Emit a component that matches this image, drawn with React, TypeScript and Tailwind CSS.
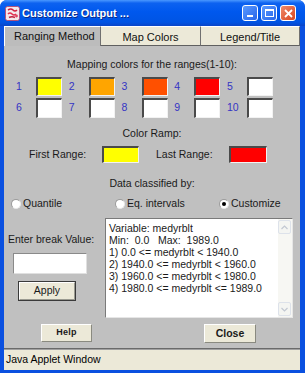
import React from "react";

function Swatch({ color, w = 26, h = 19 }: { color: string; w?: number; h?: number }) {
  return (
    <div
      className="border-t-2 border-l-2 border-b border-r border-t-[#4a4a4a] border-l-[#4a4a4a] border-b-[#f2f2f2] border-r-[#f2f2f2]"
      style={{ width: w, height: h, background: color }}
    />
  );
}

function Radio({ checked }: { checked?: boolean }) {
  return (
    <div className="w-[10px] h-[10px] rounded-full bg-white border border-t-[#9a9a9a] border-l-[#9a9a9a] border-b-[#e8e8e8] border-r-[#e8e8e8] flex items-center justify-center">
      {checked && <div className="w-[4px] h-[4px] rounded-full bg-black" />}
    </div>
  );
}

export default function App() {
  const row1 = [
    { n: "1", c: "#ffff00" },
    { n: "2", c: "#ffa500" },
    { n: "3", c: "#ff5000" },
    { n: "4", c: "#ff0000" },
    { n: "5", c: "#ffffff" },
  ];
  const row2 = ["6", "7", "8", "9", "10"];
  return (
    <div className="w-[305px] h-[373px] bg-[#0a50e0] rounded-t-[7px] flex flex-col overflow-hidden font-['Liberation_Sans',Arial,sans-serif] text-[#1a1a1a]">
      {/* Title bar */}
      <div className="h-[26px] shrink-0 flex items-center bg-[linear-gradient(to_bottom,#4a98ff_0%,#0d62f0_12%,#0058ee_45%,#0054e4_85%,#0a45c8_100%)] pl-[5px] pr-[9px]">
        <svg width="15" height="15" viewBox="0 0 15 15" className="shrink-0">
          <rect x="0.5" y="0.5" width="14" height="14" rx="2" fill="#f4e8ec" stroke="#c04060" strokeWidth="0.8" />
          <path d="M3 4 Q6 2 8 4 T12 4" stroke="#d02040" strokeWidth="1.6" fill="none" />
          <path d="M3 8 Q5 6 7 8 T11 8" stroke="#e03050" strokeWidth="1.6" fill="none" />
          <path d="M4 11.5 Q7 10 10 11.5" stroke="#c02040" strokeWidth="1.6" fill="none" />
          <circle cx="11.5" cy="10" r="1.4" fill="#e04060" />
        </svg>
        <div className="ml-[2px] text-white font-bold text-[11px] [text-shadow:1px_1px_0_#0a2a8a]">
          Customize Output ...
        </div>
        <div className="ml-auto flex gap-[3px] items-center">
          <div className="w-[16px] h-[16px] rounded-[3px] border border-white bg-[linear-gradient(135deg,#5a9aff,#2866ea)] flex items-end justify-center pb-[3px]">
            <div className="w-[6px] h-[2px] bg-white" />
          </div>
          <div className="w-[16px] h-[16px] rounded-[3px] border border-white bg-[linear-gradient(135deg,#5a9aff,#2866ea)] flex items-center justify-center">
            <div className="w-[9px] h-[8px] border border-white border-t-2" />
          </div>
          <div className="w-[16px] h-[16px] rounded-[3px] border border-white bg-[linear-gradient(135deg,#f08a6a,#d8451e)] flex items-center justify-center">
            <svg width="9" height="9" viewBox="0 0 9 9">
              <path d="M1 1 L8 8 M8 1 L1 8" stroke="white" strokeWidth="1.8" />
            </svg>
          </div>
        </div>
      </div>

      {/* Body */}
      <div className="flex-1 ml-[4px] mr-[5px] mb-[3px] flex flex-col bg-[#c0c0c0]">
        {/* Tabs */}
        <div className="h-[20px] shrink-0 flex text-[11px] text-[#111] bg-[#c0c0c0]">
          <div className="w-[97px] bg-[#bcbcbc] border-t border-l border-white border-r border-r-[#707070] pl-[9px] pt-[1px]">
            Ranging Method
          </div>
          <div className="w-[100px] bg-[#ece9d8] border-t border-white border-r border-r-[#707070] border-b border-b-[#606060] flex items-center justify-center pt-[2px]">
            Map Colors
          </div>
          <div className="flex-1 bg-[#ece9d8] border-t border-white border-r border-r-[#707070] border-b border-b-[#606060] flex items-center justify-center pt-[2px]">
            Legend/Title
          </div>
        </div>

        {/* Heading */}
        <div className="mt-[11px] h-[14px] leading-[14px] text-[10.5px] text-center">
          Mapping colors for the ranges(1-10):
        </div>

        {/* Color grid */}
        <div className="mt-[6px] flex flex-col gap-[2px] pl-[12px]">
          <div className="flex h-[19px]">
            {row1.map((r) => (
              <div key={r.n} className="w-[52.75px] flex items-center">
                <div className="w-[20px] text-[10.5px] text-[#3434c4]">{r.n}</div>
                <Swatch color={r.c} />
              </div>
            ))}
          </div>
          <div className="flex h-[20px]">
            {row2.map((n) => (
              <div key={n} className="w-[52.75px] flex items-center">
                <div className="w-[20px] text-[10.5px] text-[#3434c4]">{n}</div>
                <Swatch color="#ffffff" h={20} />
              </div>
            ))}
          </div>
        </div>

        {/* Color Ramp */}
        <div className="mt-[8px] h-[14px] leading-[14px] text-[10.5px] text-center">Color Ramp:</div>
        <div className="mt-[6px] h-[17px] flex items-center pl-[25px] text-[10.5px]">
          <div className="w-[73px]">First Range:</div>
          <Swatch color="#ffff00" w={37} h={17} />
          <div className="w-[17px]" />
          <div className="w-[73px]">Last Range:</div>
          <Swatch color="#ff0000" w={38} h={17} />
        </div>

        {/* Data classified */}
        <div className="mt-[13px] h-[14px] leading-[14px] text-[10.5px] text-center">Data classified by:</div>
        <div className="mt-[7px] h-[14px] flex items-center pl-[7px] text-[10.5px]">
          <div className="w-[104px] flex items-center gap-[2px]">
            <Radio />
            <span>Quantile</span>
          </div>
          <div className="w-[104px] flex items-center gap-[2px]">
            <Radio />
            <span>Eq. intervals</span>
          </div>
          <div className="flex items-center gap-[2px]">
            <Radio checked />
            <span>Customize</span>
          </div>
        </div>

        {/* Lower section */}
        <div className="mt-[7px] h-[100px] flex">
          <div className="w-[101px] flex flex-col">
            <div className="mt-[14px] ml-[4px] h-[14px] leading-[14px] text-[10.5px]">Enter break Value:</div>
            <div className="mt-[7px] ml-[9px] w-[74px] h-[21px] bg-white border-t border-l border-t-[#8a8a8a] border-l-[#8a8a8a] border-b border-r border-b-[#e0e0e0] border-r-[#e0e0e0]" />
            <div className="mt-[7px] ml-[14px] w-[58px] h-[20px] bg-[#ece9d8] border border-[#3a3a3a] flex items-center justify-center">
              <div className="w-full h-full border border-t-white border-l-white border-b-[#9a9a90] border-r-[#9a9a90] flex items-center justify-center text-[10.5px]">
                Apply
              </div>
            </div>
          </div>
          <div className="w-[188px] h-[100px] bg-white border-t border-l border-t-[#7a7a7a] border-l-[#7a7a7a] border-b border-r border-b-[#e6e6e6] border-r-[#e6e6e6] flex">
            <div className="flex-1 pl-[3px] pt-[3px] text-[10.5px] leading-[12px] whitespace-pre text-[#1a1a1a]">
              {"Variable: medyrblt\nMin:  0.0   Max:  1989.0\n1) 0.0 <= medyrblt < 1940.0\n2) 1940.0 <= medyrblt < 1960.0\n3) 1960.0 <= medyrblt < 1980.0\n4) 1980.0 <= medyrblt <= 1989.0"}
            </div>
            <div className="w-[14px] bg-[#f7f7f3] flex flex-col justify-between py-[1px] pr-[1px]">
              <div className="h-[14px] border border-[#dde2ea] bg-[#f4f5f2] rounded-[2px] flex items-center justify-center">
                <svg width="7" height="5" viewBox="0 0 7 5">
                  <path d="M0.5 4 L3.5 1 L6.5 4" stroke="#c2c8d2" strokeWidth="1.2" fill="none" />
                </svg>
              </div>
              <div className="h-[14px] border border-[#dde2ea] bg-[#f4f5f2] rounded-[2px] flex items-center justify-center">
                <svg width="7" height="5" viewBox="0 0 7 5">
                  <path d="M0.5 1 L3.5 4 L6.5 1" stroke="#c2c8d2" strokeWidth="1.2" fill="none" />
                </svg>
              </div>
            </div>
          </div>
        </div>

        {/* Bottom buttons */}
        <div className="mt-[6px] h-[19px] flex">
          <div className="ml-[37px] w-[51px] h-[18px] bg-[#ece9d8] border border-t-white border-l-white border-b-[#8a8a80] border-r-[#8a8a80] flex items-center justify-center text-[9px] font-bold tracking-[0.3px]">
            Help
          </div>
          <div className="ml-[112px] w-[52px] h-[19px] bg-[#ece9d8] border border-t-white border-l-white border-b-[#8a8a80] border-r-[#8a8a80] flex items-center justify-center text-[10.5px] font-bold">
            Close
          </div>
        </div>

        {/* Separator + status */}
        <div className="mt-[5px] h-[2px] bg-[#6a6a6a] border-b border-b-[#a0a0a0]" />
        <div className="flex-1 bg-[#ece9d8] flex items-end pb-[2px] pl-[2px] text-[10.5px] text-black">
          Java Applet Window
        </div>
      </div>
    </div>
  );
}
